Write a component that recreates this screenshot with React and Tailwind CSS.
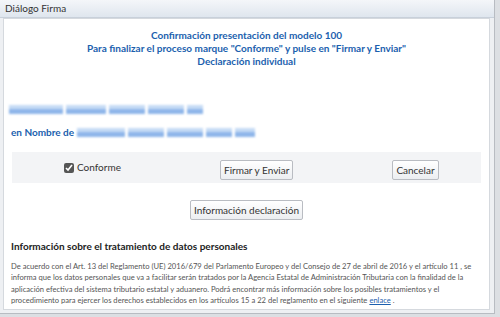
import React, { useState } from "react";

const Blurred = ({ widths }) => (
  <div className="flex items-center gap-[3px] blur-[1.2px]">
    {widths.map((w, i) => (
      <div key={i} className="flex flex-col">
        <div className="h-[4px] bg-[#c6dbf5]" style={{ width: w }} />
        <div className="h-[5px] bg-[#8fb6ea]" style={{ width: w }} />
      </div>
    ))}
  </div>
);

const Btn = ({ children }) => (
  <button className="h-[20px] px-[3px] border border-[#b9bcc2] rounded-[2px] bg-gradient-to-b from-white to-[#eceef1] text-[10px] text-[#333] leading-none">
    {children}
  </button>
);

export default function App() {
  const [checked, setChecked] = useState(true);

  return (
    <div className="w-[500px] h-[317px] bg-[#dcdfe3] overflow-hidden font-['Lato',sans-serif]">
      <div className="w-[495px] h-[314px] flex flex-col border-r border-b border-[#b8bcc2] bg-[#eef0f3]">
        <div className="h-[18px] px-[5px] flex items-center bg-gradient-to-b from-[#f4f6f9] to-[#dfe6ee] border-b border-[#c8d0da] text-[10px] text-[#333]">
          Diálogo Firma
        </div>
        <div className="flex-1 ml-[3px] mr-[4px] mb-[3px] bg-white border border-[#d5d9de] flex flex-col">
          <div className="pt-[10px] flex flex-col items-center text-[10px] font-bold text-[#1b5fae] leading-[13px]">
            <div>Confirmación presentación del modelo 100</div>
            <div>Para finalizar el proceso marque "Conforme" y pulse en "Firmar y Enviar"</div>
            <div>Declaración individual</div>
          </div>

          <div className="mt-[37px] ml-[5px]">
            <Blurred widths={[54, 40, 36, 36, 16]} />
          </div>

          <div className="mt-[11px] ml-[7px] flex items-center gap-[3px]">
            <span className="text-[10px] font-bold text-[#1b5fae]">en Nombre de</span>
            <Blurred widths={[48, 36, 36, 26, 20]} />
          </div>

          <div className="mt-[12px] mx-[8px] h-[31px] bg-[#f3f4f6] flex items-center">
            <label className="ml-[52px] w-[150px] flex items-center gap-[3px] text-[10px] text-[#333]">
              <input
                type="checkbox"
                checked={checked}
                onChange={(e) => setChecked(e.target.checked)}
                className="w-[10px] h-[10px] m-0 accent-[#555]"
              />
              Conforme
            </label>
            <div className="ml-[6px]">
              <Btn>Firmar y Enviar</Btn>
            </div>
            <div className="ml-[99px]">
              <Btn>Cancelar</Btn>
            </div>
          </div>

          <div className="mt-[17px] flex justify-center">
            <Btn>Información declaración</Btn>
          </div>

          <div className="mt-[19px] px-[7px] text-[10px] font-bold text-[#222] leading-[14px]">
            Información sobre el tratamiento de datos personales
          </div>
          <p className="mt-[8px] px-[7px] text-[7.6px] leading-[11.3px] text-[#555]">
            De acuerdo con el Art. 13 del Reglamento (UE) 2016/679 del Parlamento Europeo y del Consejo de 27 de abril de 2016 y el artículo 11 , se informa que los datos personales que va a facilitar serán tratados por la Agencia Estatal de Administración Tributaria con la finalidad de la aplicación efectiva del sistema tributario estatal y aduanero. Podrá encontrar más información sobre los posibles tratamientos y el procedimiento para ejercer los derechos establecidos en los artículos 15 a 22 del reglamento en el siguiente
            <a href="#" className="ml-[2px] text-[#1b5fae] underline">enlace</a>
            <span className="ml-[2px]">.</span>
          </p>
        </div>
      </div>
    </div>
  );
}
